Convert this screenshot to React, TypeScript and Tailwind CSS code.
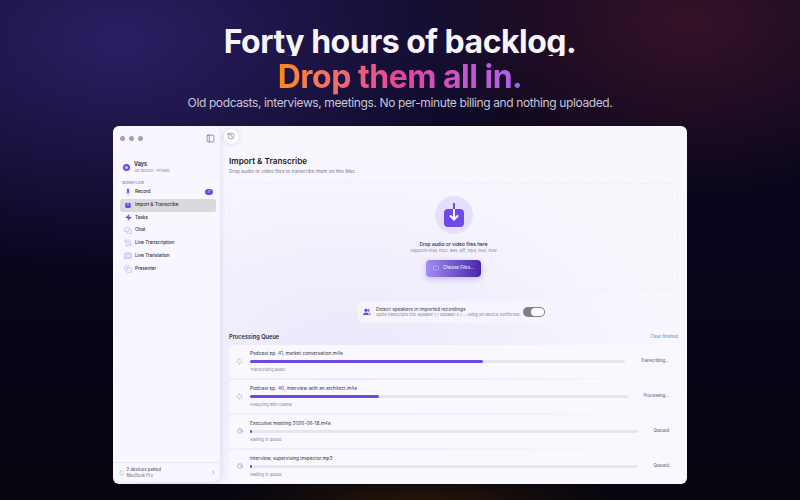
import { ChevronRight, Clock, Folder, Loader, MessageSquare, MessagesSquare, PanelLeft, ScrollText, History, Smartphone, Users, Zap, Copy } from "lucide-react";

const MicIcon = () => (
    <svg viewBox="0 0 8 8" className="w-[8px] h-[8px] shrink-0">
        <rect x="2.9" y="0.6" width="2.2" height="4.4" rx="1.1" fill="#7a58e6" />
        <path d="M1.9 3.6a2.1 2.1 0 0 0 4.2 0M4 5.8v1.6" fill="none" stroke="#a896ee" strokeWidth="0.6" />
    </svg>
);

const ImportIcon = () => (
    <svg viewBox="0 0 8 8" className="w-[8px] h-[8px] shrink-0">
        <rect x="1.2" y="2" width="5.6" height="5" rx="1.2" fill="#6d48e2" />
        <path d="M4 0.8v3.6M3 3.4l1 1 1-1" fill="none" stroke="#cfc4f7" strokeWidth="0.6" />
    </svg>
);

const navItems = [
    { label: "Record", icon: <MicIcon />, badge: "7" },
    { label: "Import & Transcribe", icon: <ImportIcon />, active: true },
    { label: "Tasks", icon: <Zap className="w-[7px] h-[7px] mx-[0.5px] text-[#6d48e2] fill-[#6d48e2] shrink-0" strokeWidth={1.5} /> },
    { label: "Chat", icon: <MessagesSquare className="w-[8px] h-[8px] text-[#a896ee] shrink-0" strokeWidth={1.5} /> },
    { label: "Live Transcription", icon: <ScrollText className="w-[8px] h-[8px] text-[#b9aaf2] shrink-0" strokeWidth={1.5} /> },
    { label: "Live Translation", icon: <MessageSquare className="w-[8px] h-[8px] text-[#a896ee] fill-[#e4dcfa] shrink-0" strokeWidth={1.5} /> },
    { label: "Presenter", icon: <Copy className="w-[8px] h-[8px] text-[#a896ee] shrink-0" strokeWidth={1.5} /> },
];

const queue = [
    { name: "Podcast ep. 41, market conversation.m4a", sub: "Transcribing audio", status: "Transcribing...", pct: 62, width: "w-[375px]", busy: true },
    { name: "Podcast ep. 40, interview with an architect.m4a", sub: "Analyzing with Ollama", status: "Processing...", pct: 34, width: "w-[378px]", busy: true },
    { name: "Executive meeting 2026-06-18.m4a", sub: "Waiting in queue", status: "Queued", pct: 0.6, width: "w-[388px]", busy: false },
    { name: "Interview, supervising inspector.mp3", sub: "Waiting in queue", status: "Queued", pct: 0.6, width: "w-[388px]", busy: false },
];

const Sidebar = () => (
    <div className="w-[107px] h-[356px] shrink-0 flex flex-col rounded-[7px] bg-[#f8f6fe] shadow-[0_0_6px_rgba(90,70,160,0.18)]">
        <div className="flex items-center justify-between pl-[7px] pr-[5px] pt-[6px] h-[19px]">
            <div className="flex gap-[4px]">
                <div className="w-[5px] h-[5px] rounded-full bg-[#a3a2a8]" />
                <div className="w-[5px] h-[5px] rounded-full bg-[#a3a2a8]" />
                <div className="w-[5px] h-[5px] rounded-full bg-[#a3a2a8]" />
            </div>
            <PanelLeft className="w-[9px] h-[9px] text-[#55545e]" strokeWidth={1.5} />
        </div>
        <div className="flex items-center gap-[4px] pl-[10px] mt-[16px]">
            <div className="w-[7px] h-[7px] rounded-full bg-[#6d4ae0] flex items-center justify-center">
                <div className="w-[3px] h-[3px] rounded-full bg-[#cfc4f7]" />
            </div>
            <div className="flex flex-col">
                <span className="text-[5.5px] leading-[7px] font-semibold text-[#23222c]">Vays</span>
                <span className="text-[4px] leading-[5px] text-[#8a8896]">On device · Private</span>
            </div>
        </div>
        <div className="text-[3.6px] leading-[5px] pl-[9px] mt-[8px] text-[#85838f] font-medium tracking-wide">WORKFLOW</div>
        <div className="flex flex-col ml-[7px] mr-[4px]">
            {navItems.map((item) => (
                <div
                    key={item.label}
                    className={
                        item.active
                            ? "h-[12.75px] flex items-center gap-[3px] pl-[4px] pr-[3px] rounded-[2.5px] bg-[#dadadc]"
                            : "h-[12.75px] flex items-center gap-[3px] pl-[4px] pr-[3px] rounded-[2.5px]"
                    }
                >
                    {item.icon}
                    <span className="text-[4.6px] font-medium text-[#2f2e38] flex-1 leading-none">{item.label}</span>
                    {item.badge && (
                        <span className="w-[8px] h-[6px] rounded-full bg-[#6d4ae0] text-white text-[3.5px] leading-[6px] text-center">
                            {item.badge}
                        </span>
                    )}
                </div>
            ))}
        </div>
        <div className="mt-auto h-[20px] border-t border-[#e9e6f2] flex items-center pl-[6px] pr-[4px] gap-[2.5px]">
            <Smartphone className="w-[5px] h-[6px] text-[#7fc78a] shrink-0" strokeWidth={2} />
            <div className="flex flex-col flex-1">
                <span className="text-[4.4px] leading-[6px] text-[#3b3a44]">2 devices paired</span>
                <span className="text-[4.2px] leading-[6px] text-[#6f6d7a]">MacBook Pro</span>
            </div>
            <ChevronRight className="w-[5px] h-[5px] text-[#55545e]" strokeWidth={2} />
        </div>
    </div>
);

const QueueRow = ({ row }: { row: (typeof queue)[number] }) => (
    <div className="h-[33px] rounded-[4px] bg-[#f9f8fe] flex items-center pl-[7px] pr-[9px]">
        <div className="w-[7px] flex justify-center shrink-0">
            {row.busy ? (
                <Loader className="w-[7px] h-[7px] text-[#8b8a96]" strokeWidth={1.5} />
            ) : (
                <Clock className="w-[6px] h-[6px] text-[#66656f]" strokeWidth={1.5} />
            )}
        </div>
        <div className="ml-[7px] flex flex-col gap-[3.5px]">
            <span className="text-[4.75px] leading-[7px] text-[#33323c]">{row.name}</span>
            <div className={`${row.width} h-[3px] rounded-full bg-[#e7e6ee]`}>
                <div className="h-full rounded-full bg-[#6d48e2]" style={{ width: `${row.pct}%` }} />
            </div>
            <span className="text-[4px] leading-[6px] text-[#83818f]">{row.sub}</span>
        </div>
        <span className="ml-auto text-[4.2px] text-[#4e4d58]">{row.status}</span>
    </div>
);

const DropIcon = () => (
    <svg viewBox="0 0 38 38" className="w-[38px] h-[38px]">
        <circle cx="19" cy="19" r="19" fill="#e5dffa" />
        <rect x="9" y="13" width="20" height="18" rx="4" fill="#6d48ea" />
        <path d="M19 7v6" stroke="#6d48ea" strokeWidth="2" />
        <path d="M19 13v10M15 19.5l4 4 4-4" stroke="#fff" strokeWidth="2" fill="none" />
    </svg>
);

const Main = () => (
    <div className="flex-1 min-w-0 pl-[9px] pr-[9px] relative">
        <div className="absolute left-[3.5px] top-[2.5px] w-[15px] h-[15px] rounded-full bg-white shadow-[0_0_4px_rgba(60,50,110,0.2)] flex items-center justify-center">
            <History className="w-[8px] h-[8px] text-[#4f4e58]" strokeWidth={1.5} />
        </div>
        <div className="text-[8.2px] leading-[11px] font-semibold text-[#23222c] mt-[30px]">Import &amp; Transcribe</div>
        <div className="text-[4.8px] leading-[7px] text-[#7e7c8a] mt-[1px]">Drop audio or video files to transcribe them on this Mac.</div>
        <div className="mt-[8px] h-[107px] rounded-[5px] border border-dashed border-[#f0edf8] flex flex-col items-center pt-[12px]">
            <DropIcon />
            <div className="text-[4.85px] leading-[7px] font-medium text-[#2b2a34] mt-[6.5px]">Drop audio or video files here</div>
            <div className="text-[4px] leading-[6px] text-[#86848f]">Supports m4a, mp3, wav, aiff, mp4, mov, m4v</div>
            <div className="mt-[6px] w-[55px] h-[17px] rounded-[4px] bg-linear-to-r from-[#a58cf2] to-[#4a22a8] shadow-[0_2px_6px_rgba(100,70,220,0.3)] flex items-center justify-center gap-[4px]">
                <Folder className="w-[6px] h-[6px] text-[#efeaff]" strokeWidth={1.5} />
                <span className="text-[4.4px] font-medium text-[#efeaff]">Choose Files...</span>
            </div>
        </div>
        <div className="flex justify-center mt-[11px]">
            <div className="h-[22px] w-[191px] rounded-[5px] bg-[#f6f4fd] flex items-center pl-[5px] pr-[3px]">
                <Users className="w-[8px] h-[8px] text-[#6d48e2] fill-[#6d48e2] shrink-0" strokeWidth={2} />
                <div className="ml-[5px] w-[144px] shrink-0 flex flex-col whitespace-nowrap">
                    <span className="text-[4.8px] leading-[6px] text-[#3b3a44]">Detect speakers in imported recordings</span>
                    <span className="text-[4.05px] leading-[6px] text-[#83818f]">Splits transcripts into Speaker 1 / Speaker 2 / ... using on-device Sortformer.</span>
                </div>
                <div className="ml-[3px] w-[22px] h-[10px] rounded-full bg-[#7f7f83] flex items-center justify-end pr-[1px] shrink-0">
                    <div className="w-[13px] h-[8px] rounded-full bg-white" />
                </div>
            </div>
        </div>
        <div className="flex items-center justify-between mt-[10px] h-[9px]">
            <span className="text-[5.7px] font-semibold text-[#2b2a34]">Processing Queue</span>
            <span className="text-[4.2px] text-[#4a86d8]">Clear finished</span>
        </div>
        <div className="flex flex-col gap-[2px] mt-[2.5px]">
            {queue.map((row) => (
                <QueueRow key={row.name} row={row} />
            ))}
        </div>
    </div>
);

export default function App() {
    return (
        <div className="w-[800px] h-[500px] overflow-hidden flex flex-col items-center font-['Inter',sans-serif] bg-[radial-gradient(ellipse_420px_240px_at_120px_40px,#2b1e63_0%,transparent_100%),radial-gradient(ellipse_280px_180px_at_690px_20px,#351228_0%,transparent_100%),radial-gradient(ellipse_200px_30px_at_420px_500px,#241408_0%,transparent_100%),linear-gradient(#0c0820,#06051a_60%,#07050f)]">
            <div className="mt-[22px] h-[34px] overflow-hidden text-[32px] leading-[40px] font-bold text-[#f7f5fb] tracking-[-0.5px]">
                Forty hours of backlog.
            </div>
            <div className="mt-[1px] text-[32px] leading-[40px] font-bold tracking-[-0.5px] bg-linear-to-r from-[#fa8a10] via-[#e8409a] to-[#a860f0] bg-clip-text text-transparent">
                Drop them all in.
            </div>
            <div className="-mt-[3px] text-[12px] leading-[18px] tracking-[-0.38px] text-[#c9c5d8]">
                Old podcasts, interviews, meetings. No per-minute billing and nothing uploaded.
            </div>
            <div className="mt-[14px] w-[574px] h-[358px] shrink-0 rounded-[6px] overflow-hidden flex bg-[radial-gradient(ellipse_320px_200px_at_230px_230px,#ece7fb_0%,transparent_100%),linear-gradient(#f8f7fe,#f8f7fe)]">
                <Sidebar />
                <Main />
            </div>
        </div>
    );
}
